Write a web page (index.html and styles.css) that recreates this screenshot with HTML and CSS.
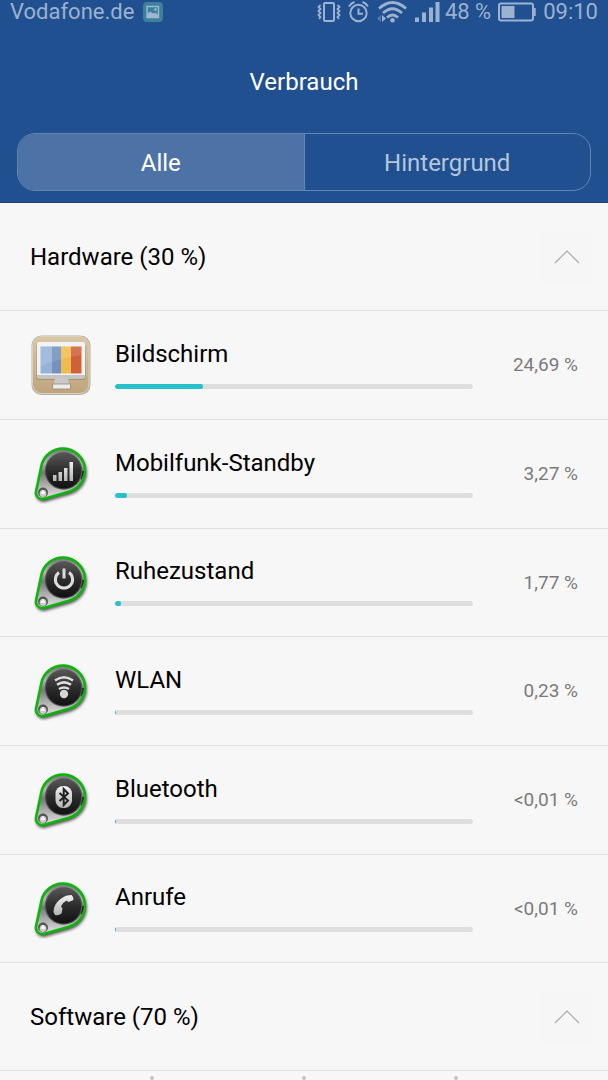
FILE: index.html
```html
<!DOCTYPE html>
<html lang="de">
  <head>
    <meta charset="UTF-8" />
    <meta name="viewport" content="width=device-width, initial-scale=1.0" />
    <title>Verbrauch</title>
    <link rel="stylesheet" href="styles.css">
  </head>
  <body>
    <!-- shared icon parts -->
    <svg class="defs" width="0" height="0" aria-hidden="true">
      <defs>
        <linearGradient id="metal" x1="0" y1="0" x2="0" y2="1">
          <stop offset="0" stop-color="#777" />
          <stop offset="0.3" stop-color="#b4b4b4" />
          <stop offset="0.48" stop-color="#777" />
          <stop offset="0.7" stop-color="#aaa" />
          <stop offset="1" stop-color="#e4e4e4" />
        </linearGradient>
        <linearGradient id="disc" x1="0" y1="0" x2="0" y2="1">
          <stop offset="0" stop-color="#555" />
          <stop offset="0.5" stop-color="#2c2c2c" />
          <stop offset="1" stop-color="#111" />
        </linearGradient>
        <linearGradient id="glyph" x1="0" y1="0" x2="0" y2="1">
          <stop offset="0" stop-color="#f2f2f2" />
          <stop offset="1" stop-color="#b4b4b4" />
        </linearGradient>
        <linearGradient id="wood" x1="0" y1="0" x2="0" y2="1">
          <stop offset="0" stop-color="#d9c7a6" />
          <stop offset="1" stop-color="#bfa57c" />
        </linearGradient>
        <filter id="shadow" x="-20%" y="-20%" width="140%" height="140%">
          <feGaussianBlur stdDeviation="1.5" />
        </filter>
        <symbol id="badge" viewBox="0 0 60 60">
          <path d="M10.4 21A22 22 0 1 1 38 46.7L13.3 53.8A6.5 6.5 0 0 1 5.1 46.2Z" transform="translate(1 2)" fill="#555" stroke="#555" stroke-width="2" filter="url(#shadow)" />
          <path d="M10.4 21A22 22 0 1 1 38 46.7L13.3 53.8A6.5 6.5 0 0 1 5.1 46.2Z" fill="url(#metal)" stroke="#0cb40c" stroke-width="2.6" />
          <path d="M48 26h5a21 21 0 0 1-3 9z" fill="#222" />
          <circle cx="32.6" cy="26" r="18.8" fill="#555" />
          <circle cx="32.6" cy="26" r="17.6" fill="url(#disc)" />
          <circle cx="12" cy="47.5" r="5" fill="#555" />
          <circle cx="12" cy="48.5" r="3.4" fill="#ccc" />
          <path d="M12 45v4M10 48h4" stroke="#fff" stroke-width="1.4" />
        </symbol>
      </defs>
    </svg>

    <header class="header">
      <div class="status-bar">
        <span>Vodafone.de</span>
        <svg width="20" height="20" viewBox="0 0 20 20">
          <rect width="20" height="20" rx="4" fill="#3c809c" />
          <path d="M4 4.500H15.500V15.500H4Z" fill="none" stroke="#9fb8d2" stroke-width="1.400" />
          <path d="M4 15.500V12l3-2.500 3 2 2-.8 3.500 2.300v2.500z" fill="#9fb8d2" />
          <circle cx="12.500" cy="7.500" r="1.300" fill="#9fb8d2" />
        </svg>
        <div class="status-icons">
          <svg width="24" height="22" viewBox="0 0 24 22" fill="none" stroke="#9db1d0" stroke-width="2">
            <rect x="7" y="2" width="10" height="18" rx="1" />
            <path d="M3.500 4L1.500 6l2 2-2 2 2 2-2 2 2 2-1.500 2M20.500 4l2 2-2 2 2 2-2 2 2 2-2 2 1.500 2" stroke-width="1.800" />
          </svg>
          <svg width="22" height="22" viewBox="0 0 22 22" fill="none" stroke="#9db1d0" stroke-width="2">
            <circle cx="10.500" cy="12" r="8.200" />
            <path d="M10.500 7.500v5.300h4.500M1 5.500Q3 2 6.500 1M20 5.500Q18 2 14.500 1" />
          </svg>
          <svg width="31" height="22" viewBox="0 0 31 22" fill="none" stroke="#9db1d0" stroke-width="2.800">
            <path d="M2 7.500Q15.500-4.500 29 7.500M6 12Q15.500 3.500 25 12M10 16.500Q15.500 11.500 21 16.500" />
            <circle cx="15.500" cy="19.300" r="2.300" fill="#9db1d0" stroke="none" />
            <path d="M0 17.500L4 14v7z" fill="#5279ac" stroke="none" />
            <path d="M9 17.500L5 14v7z" fill="#9db1d0" stroke="none" />
          </svg>
          <svg width="25" height="22" viewBox="0 0 25 22" fill="#9db1d0">
            <path d="M0 16.500h4v4.500H0zM7 11.500h4V21H7zM14 6.500h4V21h-4zM20.500 1h4v20h-4z" />
          </svg>
          <span class="battery-level">48 %</span>
          <svg width="38" height="22" viewBox="0 0 38 22" fill="none" stroke="#9db1d0" stroke-width="2">
            <rect x="1" y="2.500" width="34" height="17" rx="2" />
            <path d="M3.500 5h13v12h-13z" fill="#9db1d0" stroke="none" />
            <path d="M36.500 7v8" stroke-width="2.400" />
          </svg>
          <span>09:10</span>
        </div>
      </div>
      <h1 class="title">Verbrauch</h1>
      <div class="tabs">
        <button class="tab active" type="button">Alle</button>
        <button class="tab" type="button">Hintergrund</button>
      </div>
    </header>

    <main>
      <div class="section-header">
        <h2>Hardware (30 %)</h2>
        <button class="toggle" type="button" aria-label="Hardware einklappen">
          <svg width="26" height="14" viewBox="0 0 26 14"><path d="M1 13L13 1l12 12" /></svg>
        </button>
      </div>
      <ul class="usage-list">
        <li class="usage-item">
          <svg class="icon" viewBox="0 0 60 60">
            <rect x="0.500" y="0.500" width="59" height="59.500" rx="10" fill="#b9b1a3" />
            <rect x="1.500" y="1.500" width="56.500" height="57" rx="9.500" fill="url(#wood)" stroke="#d8d0c0" stroke-width="1" />
            <rect x="5.500" y="9" width="49" height="36" rx="2" fill="#8f8069" opacity="0.6" />
            <rect x="6" y="7" width="48" height="36.500" rx="2" fill="#f3f3f3" />
            <path d="M6 40h48v1.500q0 2-2 2h-44q-2 0-2-2z" fill="#c4c4c4" />
            <path d="M24 43.500h13l1.500 6h-16z" fill="#c9c9c9" />
            <path d="M21.500 49h18v5h-18z" fill="#ededed" stroke="#8f8878" stroke-width="0.8" />
            <path d="M9.500 11.500h11v27h-11z" fill="#94b3d8" />
            <path d="M20.500 11.500H30v27h-9.500z" fill="#7492c0" />
            <path d="M30 11.500h10v27H30z" fill="#efbd4b" />
            <path d="M40 11.500h10.500v27H40z" fill="#d0603a" />
            <path d="M9.500 11.500h41V20Q30 22 9.500 32z" fill="#fff" opacity="0.12" />
          </svg>
          <div class="usage-info">
            <span class="name">Bildschirm</span>
            <div class="bar"><div class="bar-fill" style="width: 24.69%"></div></div>
          </div>
          <span class="percent">24,69 %</span>
        </li>
        <li class="usage-item">
          <svg class="icon" viewBox="0 -1 60 60">
            <use href="#badge" width="60" height="60" />
            <path d="M22 30h3.500v6H22zM27.500 27h3.500v9h-3.500zM33 23h3.500v13H33zM38.500 17H42v19h-3.500z" fill="url(#glyph)" />
          </svg>
          <div class="usage-info">
            <span class="name">Mobilfunk-Standby</span>
            <div class="bar"><div class="bar-fill" style="width: 3.27%"></div></div>
          </div>
          <span class="percent">3,27 %</span>
        </li>
        <li class="usage-item">
          <svg class="icon" viewBox="0 -1 60 60">
            <use href="#badge" width="60" height="60" />
            <path d="M28 18.500a8.600 8.600 0 1 0 10 0M33 14.500v10" fill="none" stroke="#dcdcdc" stroke-width="3" />
          </svg>
          <div class="usage-info">
            <span class="name">Ruhezustand</span>
            <div class="bar"><div class="bar-fill" style="width: 1.77%"></div></div>
          </div>
          <span class="percent">1,77 %</span>
        </li>
        <li class="usage-item">
          <svg class="icon" viewBox="0 -1 60 60">
            <use href="#badge" width="60" height="60" />
            <path d="M24 18.500Q33 12 42 18.500M26 22.800Q33 18 40 22.800M28 27Q33 24 38 27" fill="none" stroke="#dcdcdc" stroke-width="2.600" />
            <circle cx="33" cy="32" r="4.200" fill="#d5d5d5" />
          </svg>
          <div class="usage-info">
            <span class="name">WLAN</span>
            <div class="bar"><div class="bar-fill" style="width: 0.23%"></div></div>
          </div>
          <span class="percent">0,23 %</span>
        </li>
        <li class="usage-item">
          <svg class="icon" viewBox="0 -1 60 60">
            <use href="#badge" width="60" height="60" />
            <rect x="24.500" y="15" width="16.500" height="22" rx="7.500" fill="url(#glyph)" />
            <path d="M28.500 22l8.500 7.500-4.300 4.500V18l4.300 4.500-8.500 7.500" fill="none" stroke="#222" stroke-width="2" />
          </svg>
          <div class="usage-info">
            <span class="name">Bluetooth</span>
            <div class="bar"><div class="bar-fill" style="width: 0.1%"></div></div>
          </div>
          <span class="percent">&lt;0,01 %</span>
        </li>
        <li class="usage-item">
          <svg class="icon" viewBox="0 -1 60 60">
            <use href="#badge" width="60" height="60" />
            <path d="M36 15.500l4.500-.500q2.500 2 2 5l-5 2-2-1.500q-4 2-5.500 6l1.500 2-1 5q-3 2.500-6.500 1.500l-1.500-3Q23 20.500 36 15.500z" fill="url(#glyph)" />
          </svg>
          <div class="usage-info">
            <span class="name">Anrufe</span>
            <div class="bar"><div class="bar-fill" style="width: 0.1%"></div></div>
          </div>
          <span class="percent">&lt;0,01 %</span>
        </li>
      </ul>
      <div class="section-header">
        <h2>Software (70 %)</h2>
        <button class="toggle" type="button" aria-label="Software einklappen">
          <svg width="26" height="14" viewBox="0 0 26 14"><path d="M1 13L13 1l12 12" /></svg>
        </button>
      </div>
    </main>

    <footer class="nav-dots">
      <span class="dot"></span>
      <span class="dot"></span>
      <span class="dot"></span>
    </footer>
  </body>
</html>
```

FILE: styles.css
```css
* {
  box-sizing: border-box;
}
body {
  font-family: Roboto, "Liberation Sans", sans-serif;
  font-size: 24px;
  line-height: 28px;
  background-color: #f7f7f7;
  color: #000;
  margin: 0;
}
h1,
h2 {
  font-size: 24px;
  font-weight: 400;
  margin: 0;
}
button {
  font: inherit;
  border: none;
  cursor: pointer;
}
.defs {
  position: absolute;
}

/* blue top area */
.header {
  background-color: #20508f;
  border-bottom: 1px solid #1a4480;
  padding-bottom: 11px;
}
.status-bar {
  display: flex;
  align-items: center;
  gap: 9px;
  padding: 0 10px;
  font-size: 22px;
  line-height: 23px;
  color: #9db1d0;
}
.status-icons {
  display: flex;
  align-items: center;
  gap: 7px;
  margin-left: auto;
}
.battery-level {
  margin-left: -2px;
}
.title {
  padding: 45px 0 37px;
  text-align: center;
  color: #fff;
}
.tabs {
  display: flex;
  height: 58px;
  margin: 0 17px;
  border: 1px solid #6485b4;
  border-radius: 18px;
  overflow: hidden;
}
.tab {
  flex: 1;
  padding: 2px 0 0;
  background-color: transparent;
  color: #b4c5de;
}
.tab.active {
  background-color: #4d73a6;
  border-right: 1px solid #6485b4;
  color: #fff;
}

/* list */
.section-header {
  display: flex;
  align-items: center;
  justify-content: space-between;
  height: 108px;
  padding: 0 14px 0 30px;
  border-bottom: 1px solid #e1e1e1;
}
.toggle {
  display: flex;
  align-items: center;
  justify-content: center;
  width: 54px;
  height: 54px;
  padding: 0;
  background-color: #f6f6f6;
}
.toggle path {
  fill: none;
  stroke: #aaa;
  stroke-width: 1.2;
}
.usage-list {
  list-style: none;
  margin: 0;
  padding: 0;
}
.usage-item {
  display: flex;
  align-items: center;
  gap: 24px;
  height: 109px;
  padding: 0 30px 0 31px;
  border-bottom: 1px solid #e1e1e1;
}
.usage-item:nth-child(3n) {
  height: 108px;
}
.icon {
  width: 60px;
  height: 60px;
}
.usage-info {
  display: flex;
  flex: 1;
  flex-direction: column;
  gap: 16px;
  padding-bottom: 2px;
}
.bar {
  height: 5px;
  background-color: #dedede;
  border-radius: 3px;
  overflow: hidden;
}
.bar-fill {
  height: 100%;
  min-width: 1px;
  background-color: #26c1c9;
  border-radius: 2px;
}
.percent {
  width: 81px;
  font-size: 19px;
  text-align: right;
  white-space: nowrap;
  color: #7b7b7b;
}

/* bottom dots */
.nav-dots {
  display: flex;
  justify-content: space-around;
  padding: 5px 12.5% 0;
}
.dot {
  width: 4px;
  height: 4px;
  border-radius: 50%;
  background-color: #c4c4c4;
}
```
